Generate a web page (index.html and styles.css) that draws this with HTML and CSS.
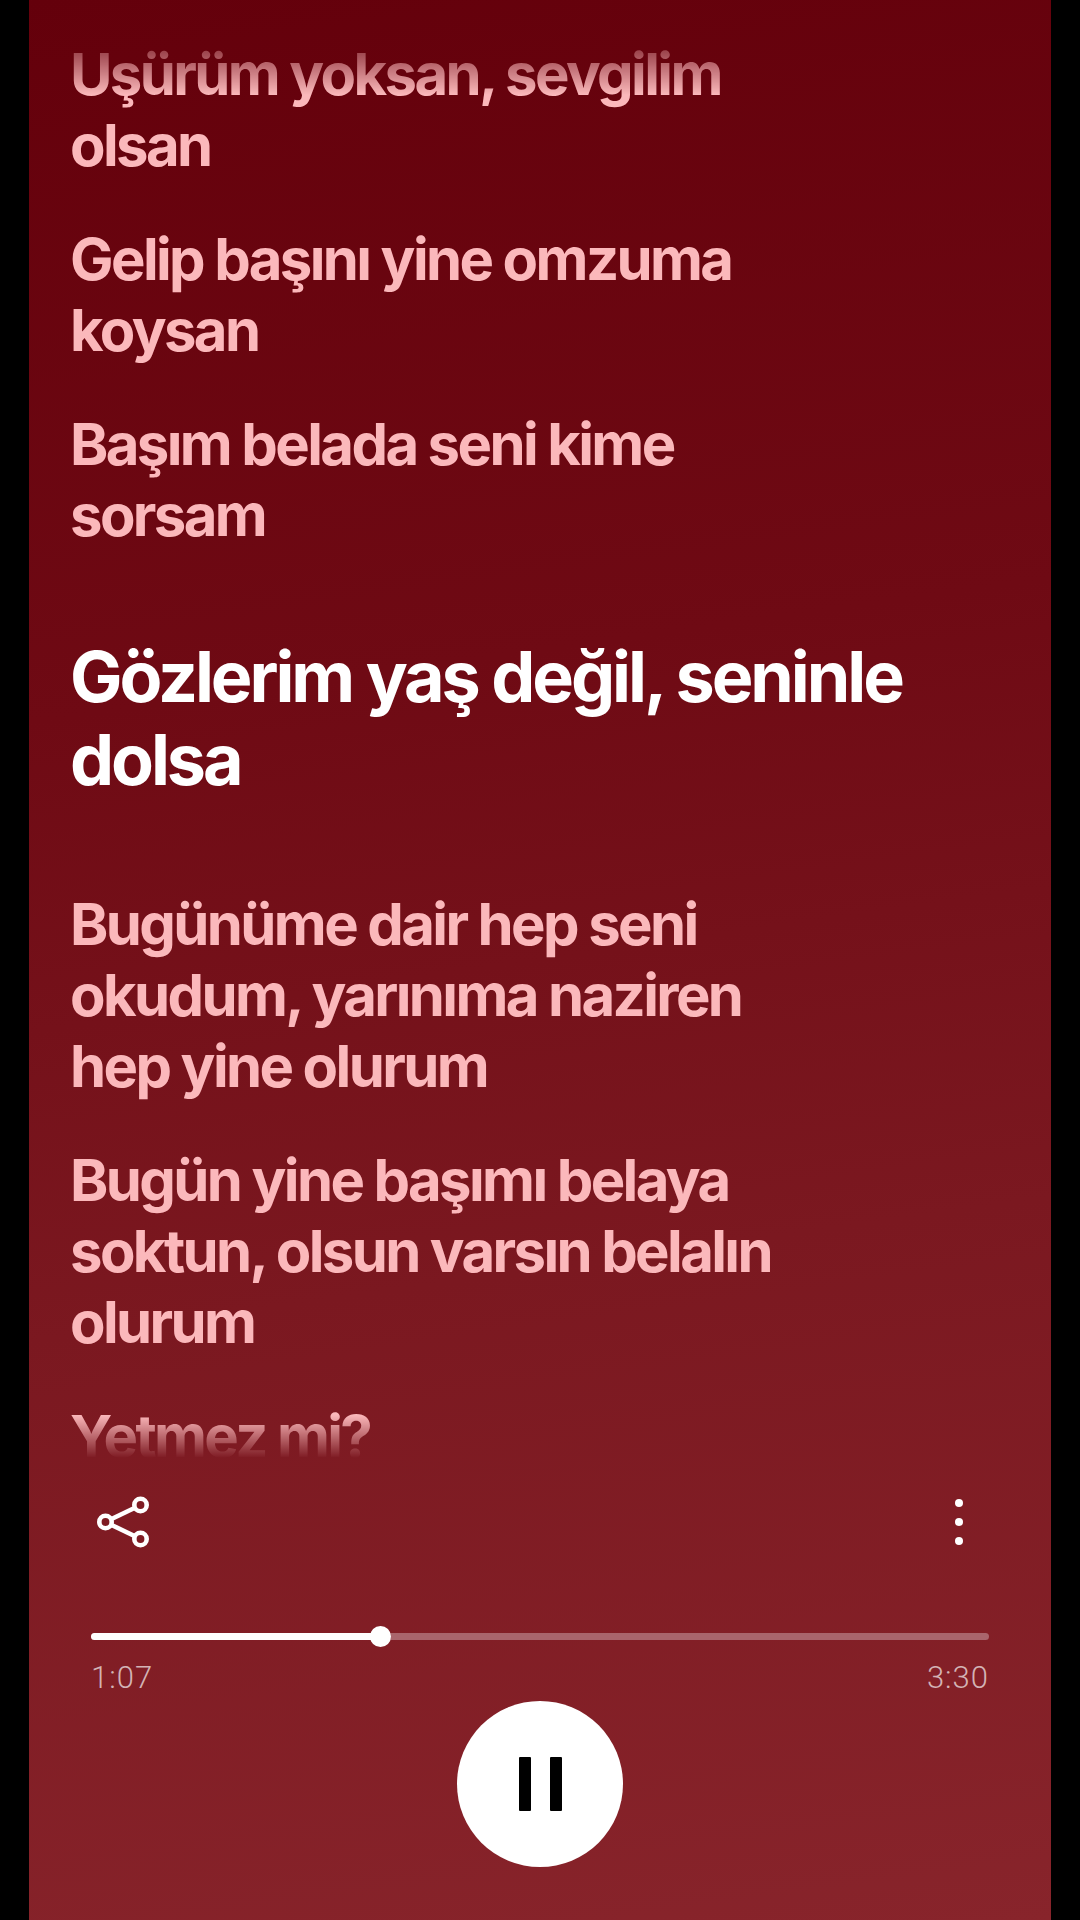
FILE: index.html
```html
<!DOCTYPE html>
<html lang="en">

<head>
    <meta charset="UTF-8">
    <meta name="viewport" content="width=device-width, initial-scale=1.0">
    <title>Lyrics</title>
    <link rel="stylesheet" href="styles.css">
</head>

<body>
    <main class="screen">
        <section class="lyrics">
            <p class="line">Uşürüm yoksan, sevgilim<br>olsan</p>
            <p class="line">Gelip başını yine omzuma<br>koysan</p>
            <p class="line">Başım belada seni kime<br>sorsam</p>
            <p class="line line-active">Gözlerim yaş değil, seninle<br>dolsa</p>
            <p class="line">Bugünüme dair hep seni<br>okudum, yarınıma naziren<br>hep yine olurum</p>
            <p class="line">Bugün yine başımı belaya<br>soktun, olsun varsın belalın<br>olurum</p>
            <p class="line">Yetmez mi?</p>
        </section>

        <section class="controls">
            <div class="actions">
                <svg class="share-icon" width="60" height="52" viewBox="0 0 60 52" fill="none" stroke="#fff" stroke-width="4.600">
                    <line x1="18" y1="23.300" x2="42" y2="11.700" />
                    <line x1="18" y1="28.700" x2="42" y2="40.300" />
                    <circle cx="12.500" cy="26" r="6.200" />
                    <circle cx="47.500" cy="9" r="6.200" />
                    <circle cx="47.500" cy="43" r="6.200" />
                </svg>
                <div class="more">
                    <span></span>
                    <span></span>
                    <span></span>
                </div>
            </div>

            <div class="track">
                <div class="track-fill"></div>
                <div class="track-knob"></div>
            </div>
            <div class="times">
                <span>1:07</span>
                <span>3:30</span>
            </div>

            <div class="play-row">
                <button class="pause-btn" aria-label="Pause">
                    <span></span>
                    <span></span>
                </button>
            </div>
        </section>
    </main>
</body>

</html>
```

FILE: styles.css
```css
body {
    margin: 0;
    padding: 0;
    background-color: #000;
    font-family: Inter, "Liberation Sans", sans-serif;
}

.screen {
    width: 1022px;
    height: 1920px;
    margin: 0 auto;
    background: linear-gradient(172deg, #64000b 0%, #6f0a14 35%, #7b1820 65%, #88242b 100%);
    overflow: hidden;
}

.lyrics {
    height: 1458px;
    box-sizing: border-box;
    padding: 39px 0 0 41px;
    overflow: hidden;
    -webkit-mask-image: linear-gradient(to bottom, rgba(0, 0, 0, 0.35) 50px, #000 95px, #000 1415px, transparent 1458px);
    mask-image: linear-gradient(to bottom, rgba(0, 0, 0, 0.35) 50px, #000 95px, #000 1415px, transparent 1458px);
}

.line {
    margin: 0 0 43px;
    color: #fbb8bb;
    font-size: 58px;
    font-weight: 700;
    line-height: 71px;
    letter-spacing: -2.6px;
}

.line-active {
    margin: 84px 0 88px;
    color: #fff;
    font-size: 70px;
    line-height: 83px;
    letter-spacing: -3.07px;
}

.controls {
    padding: 0 62px;
}

.actions {
    display: flex;
    align-items: center;
    justify-content: space-between;
    height: 52px;
    padding: 38px 0 0 2px;
}

.more {
    display: flex;
    flex-direction: column;
    gap: 11px;
    margin-right: 26px;
}

.more span {
    width: 8px;
    height: 8px;
    border-radius: 50%;
    background-color: #fff;
}

.track {
    position: relative;
    height: 7px;
    margin-top: 85px;
    border-radius: 4px;
    background-color: #a9656c;
}

.track-fill {
    width: 290px;
    height: 7px;
    border-radius: 4px;
    background-color: #fff;
}

.track-knob {
    position: absolute;
    left: 279px;
    top: -7px;
    width: 21px;
    height: 21px;
    border-radius: 50%;
    background-color: #fff;
}

.times {
    display: flex;
    justify-content: space-between;
    margin-top: 21px;
    color: #d3b3b5;
    font-family: Roboto, sans-serif;
    font-size: 31px;
    font-weight: 300;
    line-height: 34px;
    letter-spacing: 1px;
}

.play-row {
    display: flex;
    justify-content: center;
    margin-top: 6px;
}

.pause-btn {
    display: flex;
    align-items: center;
    justify-content: center;
    gap: 19px;
    width: 166px;
    height: 166px;
    padding: 0;
    border: none;
    border-radius: 50%;
    background-color: #fff;
}

.pause-btn span {
    width: 12px;
    height: 54px;
    border-radius: 1px;
    background-color: #000;
}
```
